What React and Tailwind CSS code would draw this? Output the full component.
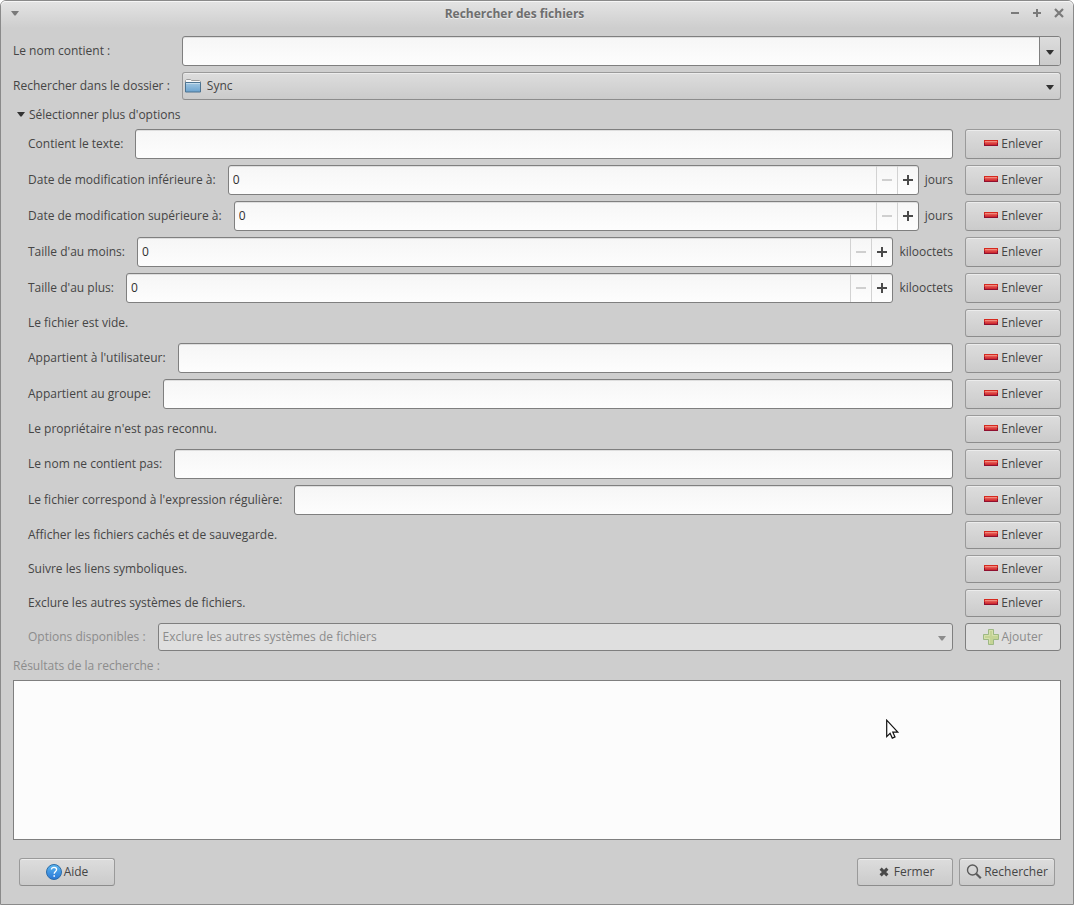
import React, { useState } from 'react';
import clsx from 'clsx';

const INITIAL_OPTIONS = [
  { id: 'text', label: 'Contient le texte:', type: 'text' },
  { id: 'mtime-max', label: 'Date de modification inférieure à:', type: 'number', unit: 'jours' },
  { id: 'mtime-min', label: 'Date de modification supérieure à:', type: 'number', unit: 'jours' },
  { id: 'size-min', label: "Taille d'au moins:", type: 'number', unit: 'kilooctets' },
  { id: 'size-max', label: "Taille d'au plus:", type: 'number', unit: 'kilooctets' },
  { id: 'empty', label: 'Le fichier est vide.' },
  { id: 'user', label: "Appartient à l'utilisateur:", type: 'text' },
  { id: 'group', label: 'Appartient au groupe:', type: 'text' },
  { id: 'no-owner', label: "Le propriétaire n'est pas reconnu." },
  { id: 'not-name', label: 'Le nom ne contient pas:', type: 'text' },
  { id: 'regex', label: "Le fichier correspond à l'expression régulière:", type: 'text' },
  { id: 'hidden', label: 'Afficher les fichiers cachés et de sauvegarde.' },
  { id: 'symlinks', label: 'Suivre les liens symboliques.' },
  { id: 'other-fs', label: 'Exclure les autres systèmes de fichiers.' },
];

const fieldClass =
  'border border-[#7f7f7f] rounded-[3px] bg-linear-to-b from-[#f6f6f6] to-[#fdfdfd] shadow-[inset_0_1px_0_#dedede]';
const raisedClass =
  'border border-[#9a9a9a] border-b-[#8c8c8c] rounded-[3px] bg-linear-to-b from-[#dddddd] to-[#cbcbcb] shadow-[inset_0_1px_0_#ececec]';

function Arrow({ className }) {
  return (
    <svg className={className} width="8" height="5" viewBox="0 0 8 5" fill="currentColor">
      <path d="M0 0h8L4.6 4.6h-1.2z" />
    </svg>
  );
}

function MinusIcon() {
  return (
    <svg width="16" height="16" viewBox="0 0 16 16" shapeRendering="crispEdges">
      <path fill="#d5291f" d="M1 4h14v3H1z" />
      <path fill="#8f1030" d="M1 7h14v3H1z" />
      <path fill="#cf2c30" d="M2 5h12v4H2z" />
      <path fill="#f0897c" d="M2 5h12v1H2z" />
      <path fill="#e25550" d="M2 6h12v1H2z" />
      <path fill="#da3e40" d="M2 7h12v1H2z" />
    </svg>
  );
}

function PlusIcon() {
  return (
    <svg width="16" height="16" viewBox="0 0 16 16">
      <path fill="#c4d496" stroke="#9db884" d="M5.5.5h5v5h5v5h-5v5h-5v-5h-5v-5h5z" />
      <path fill="none" stroke="#d6e0ac" d="M6.5 14.5v-5h-5v-3h5v-5h3v5h5" />
    </svg>
  );
}

function HelpIcon() {
  return (
    <svg width="16" height="16" viewBox="0 0 16 16">
      <defs>
        <linearGradient id="help-fill" x1="0" y1="0" x2="0" y2="1">
          <stop offset="0" stopColor="#5cb8f0" />
          <stop offset="1" stopColor="#2a76d6" />
        </linearGradient>
      </defs>
      <circle cx="8" cy="8" r="7.5" fill="url(#help-fill)" stroke="#2d6da8" />
      <path fill="none" stroke="#fff" strokeWidth="1.3" d="M5.4 5.6c0-1.5 1.1-2.3 2.6-2.3s2.6.9 2.6 2.2c0 1.9-2.4 2-2.4 4.2" />
      <path fill="#fff" d="M7.4 11.2h1.6v1.6H7.4z" />
    </svg>
  );
}

function CloseIcon() {
  return (
    <svg width="16" height="16" viewBox="0 0 16 16">
      <path stroke="#4a4a4a" strokeWidth="3" d="M4.6 4.6l6.8 6.8M11.4 4.6l-6.8 6.8" />
    </svg>
  );
}

function SearchIcon() {
  return (
    <svg width="16" height="16" viewBox="0 0 16 16" fill="none" stroke="#5a5a5a">
      <circle cx="6.5" cy="6" r="5" strokeWidth="1.4" />
      <path strokeWidth="2.2" d="M10.2 9.7l4.6 4.6" />
    </svg>
  );
}

function FolderIcon({ className }) {
  return (
    <svg className={className} width="16" height="16" viewBox="0 0 16 16">
      <defs>
        <linearGradient id="folder-fill" x1="0" y1="0" x2="0" y2="1">
          <stop offset="0" stopColor="#a3c8e2" />
          <stop offset="1" stopColor="#6ba3cf" />
        </linearGradient>
      </defs>
      <path fill="#fafafa" stroke="#9c9c9c" d="M.5 5V2.5l1-1h4l1 1h8l1 1V5" />
      <path fill="url(#folder-fill)" stroke="#4c7391" d="M.5 4.5h15v9.5H.5z" />
      <path stroke="#c4dcec" d="M1 5.5h14" />
    </svg>
  );
}

function Cursor({ className }) {
  return (
    <svg className={className} width="14" height="21" viewBox="0 0 14 21">
      <path
        fill="#fff"
        stroke="#111"
        strokeWidth="1.2"
        d="M.7 1.2v16.4l3.4-3.3 2.2 4.8 2.7-1.2-2.2-4.7h5z"
      />
    </svg>
  );
}

function Button({ tall, disabled, children, ...props }) {
  return (
    <button
      type="button"
      disabled={disabled}
      className={clsx(
        'w-24 shrink-0 flex items-center justify-center gap-[2px] pb-[1px]',
        tall ? 'h-[30px]' : 'h-7',
        disabled ? 'border border-[#7f7f7f] rounded-[3px] bg-[#dfdfdf] text-[#8c8c8c]' : raisedClass
      )}
      {...props}
    >
      {children}
    </button>
  );
}

function SpinField({ id }) {
  const [value, setValue] = useState(0);

  return (
    <div className={clsx('flex-1 min-w-0 h-[30px] flex', fieldClass)}>
      <input
        id={id}
        type="text"
        inputMode="numeric"
        value={value}
        onChange={(e) => setValue(Number(e.target.value) || 0)}
        className="flex-1 min-w-0 px-1 pb-[1px] outline-none text-[#303030]"
      />
      <button
        type="button"
        aria-label="Diminuer"
        disabled={value === 0}
        onClick={() => setValue((v) => v - 1)}
        className="w-[21px] border-l border-[#d2d2d2] flex items-center justify-center text-[#4a4a4a] disabled:text-[#cfcfcf]"
      >
        <svg width="10" height="10" viewBox="0 0 10 10" fill="currentColor">
          <path d="M0 4h10v2H0z" />
        </svg>
      </button>
      <button
        type="button"
        aria-label="Augmenter"
        onClick={() => setValue((v) => v + 1)}
        className="w-[21px] border-l border-[#d2d2d2] flex items-center justify-center text-[#4a4a4a]"
      >
        <svg width="10" height="10" viewBox="0 0 10 10" fill="currentColor">
          <path d="M0 4h4V0h2v4h4v2H6v4H4V6H0z" />
        </svg>
      </button>
    </div>
  );
}

function OptionRow({ option, onRemove }) {
  const { id, label, type, unit } = option;

  return (
    <div className="flex items-center gap-3">
      {type ? (
        <label htmlFor={id} className="pb-[1px]">
          {label}
        </label>
      ) : (
        <span className="flex-1 pb-[1px]">{label}</span>
      )}
      {type === 'text' && (
        <input id={id} type="text" className={clsx('flex-1 min-w-0 h-[30px] px-1 outline-none', fieldClass)} />
      )}
      {type === 'number' && (
        <div className="flex-1 min-w-0 flex items-center gap-1.5">
          <SpinField id={id} />
          <span className="pb-[1px]">{unit}</span>
        </div>
      )}
      <Button tall={Boolean(type)} onClick={onRemove}>
        <MinusIcon />
        Enlever
      </Button>
    </div>
  );
}

function TitleBar() {
  return (
    <header className="h-[27px] pl-2 pr-[9px] pb-[3px] flex items-center bg-linear-to-b from-[#e4e4e4] to-[#cecece] rounded-t-[5px] shadow-[inset_0_1px_0_#f6f6f6] text-[#7a7a7a]">
      <button type="button" aria-label="Menu de la fenêtre" className="w-4 pl-[2px]">
        <Arrow />
      </button>
      <h1 className="flex-1 text-center font-bold text-[#6e6e6e] [text-shadow:0_1px_0_#ececec]">
        Rechercher des fichiers
      </h1>
      <div className="w-[60px] flex justify-end gap-3">
        <button type="button" aria-label="Réduire">
          <svg width="10" height="10" viewBox="0 0 10 10" fill="currentColor">
            <path d="M1 4h8v2H1z" />
          </svg>
        </button>
        <button type="button" aria-label="Agrandir">
          <svg width="10" height="10" viewBox="0 0 10 10" fill="currentColor">
            <path d="M1 4h3V1h2v3h3v2H6v3H4V6H1z" />
          </svg>
        </button>
        <button type="button" aria-label="Fermer la fenêtre">
          <svg width="10" height="10" viewBox="0 0 10 10" stroke="currentColor" strokeWidth="2.2">
            <path d="M1 1l8 8M9 1l-8 8" />
          </svg>
        </button>
      </div>
    </header>
  );
}

export default function App() {
  const [expanded, setExpanded] = useState(true);
  const [options, setOptions] = useState(INITIAL_OPTIONS);

  return (
    <div className="min-h-screen flex flex-col bg-[#cecece] border border-[#8a8a8a] rounded-t-md font-['Open_Sans',sans-serif] text-[12px] leading-[17px] text-[#454545]">
      <TitleBar />
      <main className="flex-1 flex flex-col gap-1.5 px-3 pt-2 pb-[18px]">
        <div className="grid grid-cols-[auto_1fr] items-center gap-x-3 gap-y-1.5">
          <label htmlFor="name" className="pb-[1px]">
            Le nom contient :
          </label>
          <div className={clsx('h-[30px] flex', fieldClass)}>
            <input id="name" type="text" className="flex-1 min-w-0 px-1 outline-none" />
            <button
              type="button"
              aria-label="Recherches précédentes"
              className="w-[21px] border-l border-[#7f7f7f] rounded-r-[2px] bg-linear-to-b from-[#dddddd] to-[#cbcbcb] flex items-center justify-center pt-[3px] text-[#333333]"
            >
              <Arrow />
            </button>
          </div>
          <label htmlFor="folder" className="pb-[1px]">
            Rechercher dans le dossier :
          </label>
          <div className="relative">
            <select id="folder" className={clsx('block w-full h-7 pl-6 pb-[1px] appearance-none outline-none', raisedClass)}>
              <option>Sync</option>
            </select>
            <FolderIcon className="absolute left-[3px] top-1.5 pointer-events-none" />
            <Arrow className="absolute right-[7px] top-[13px] text-[#333333] pointer-events-none" />
          </div>
        </div>

        <button
          type="button"
          aria-expanded={expanded}
          onClick={() => setExpanded((v) => !v)}
          className="self-start flex items-center gap-1 pl-1"
        >
          <Arrow className={clsx('text-[#333333]', !expanded && '-rotate-90')} />
          Sélectionner plus d'options
        </button>

        {expanded && (
          <div className="flex flex-col gap-1.5 pl-[15px]">
            {options.map((option) => (
              <OptionRow
                key={option.id}
                option={option}
                onRemove={() => setOptions((list) => list.filter((o) => o.id !== option.id))}
              />
            ))}
            <div className="flex items-center gap-3 text-[#8c8c8c]">
              <label htmlFor="available" className="pb-[1px]">
                Options disponibles :
              </label>
              <div className="relative flex-1">
                <select
                  id="available"
                  disabled
                  className="block w-full h-7 px-1 pb-[1px] appearance-none border border-[#7f7f7f] rounded-[3px] bg-[#dfdfdf] opacity-100"
                >
                  <option>Exclure les autres systèmes de fichiers</option>
                </select>
                <Arrow className="absolute right-[7px] top-[13px] pointer-events-none" />
              </div>
              <Button disabled>
                <PlusIcon />
                Ajouter
              </Button>
            </div>
          </div>
        )}

        <h2 className="text-[#8c8c8c]">Résultats de la recherche :</h2>
        <div className="relative flex-1 min-h-40 border border-[#7f7f7f] bg-[#fcfcfc]">
          <Cursor className="absolute right-40 top-[38px]" />
        </div>

        <div className="flex gap-1.5 px-1.5 pt-3">
          <Button>
            <HelpIcon />
            Aide
          </Button>
          <div className="flex-1" />
          <Button>
            <CloseIcon />
            Fermer
          </Button>
          <Button>
            <SearchIcon />
            Rechercher
          </Button>
        </div>
      </main>
    </div>
  );
}
